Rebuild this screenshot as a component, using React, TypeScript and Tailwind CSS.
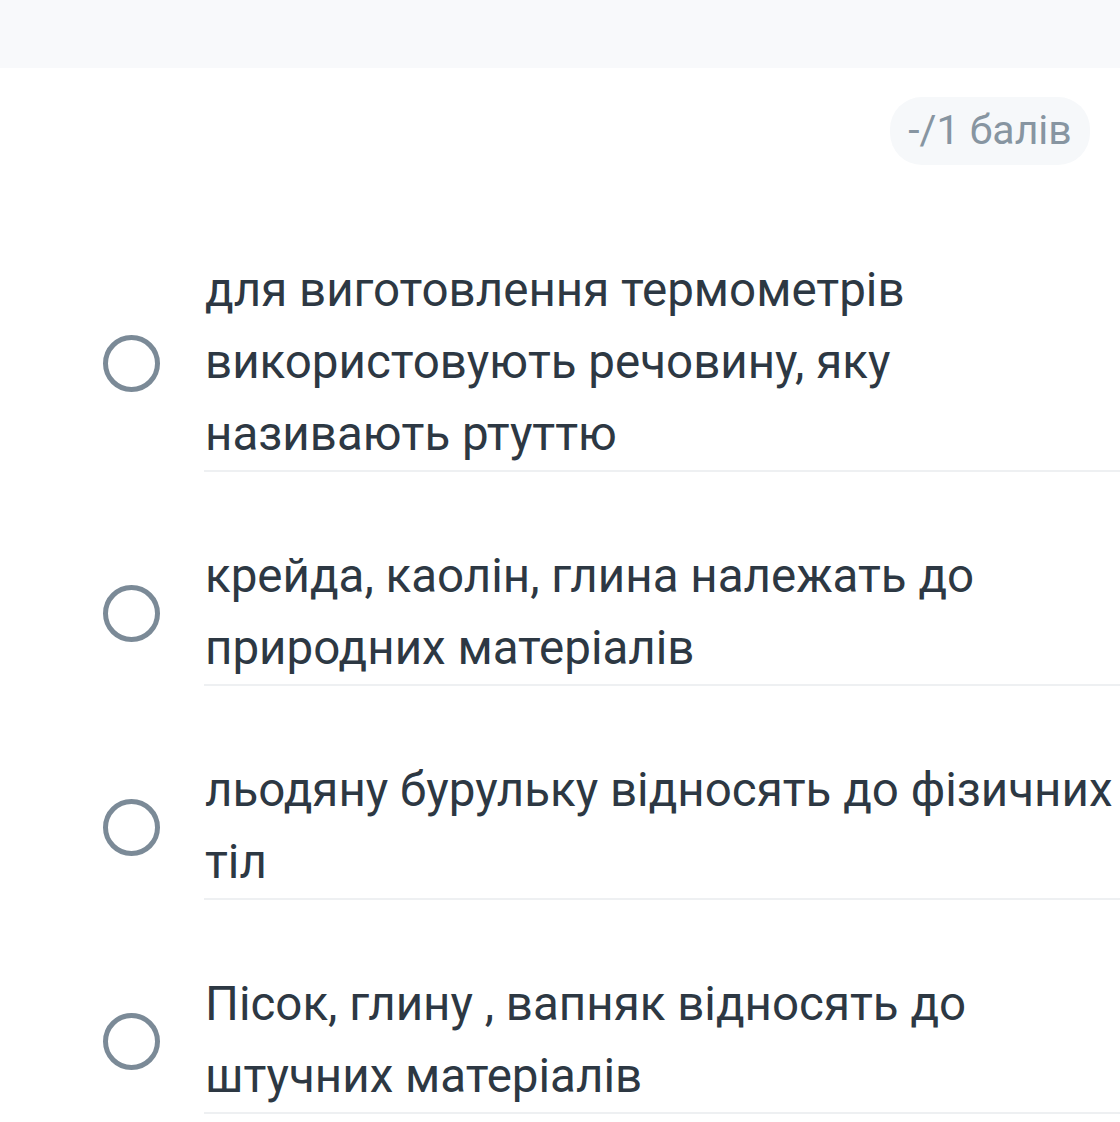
import React from 'react';

const options: string[][] = [
  ['для виготовлення термометрів', 'використовують речовину, яку', 'називають ртуттю'],
  ['крейда, каолін, глина належать до', 'природних матеріалів'],
  ['льодяну бурульку відносять до фізичних', 'тіл'],
  ['Пісок, глину , вапняк відносять до', 'штучних матеріалів'],
];

const Radio: React.FC = () => (
  <div className="w-[57px] h-[57px] shrink-0 rounded-full border-[5px] border-[#7b8a97]" />
);

export default function App() {
  return (
    <div className="w-[1120px] h-[1122px] bg-white overflow-hidden" style={{ fontFamily: 'Roboto, "Noto Sans", sans-serif' }}>
      <div className="h-[68px] bg-[#f8f9fb]" />
      <div className="flex justify-end pt-[29px] pr-[30px]">
        <div className="h-[68px] w-[200px] rounded-[32px] bg-[#f6f8fa] flex items-center justify-center text-[41px] text-[#8795a1]">
          -/1 балів
        </div>
      </div>
      <div className="pt-[21px]">
        {options.map((lines, i) => (
          <div key={i} className="flex items-center pt-[68px] pl-[103px]">
            <Radio />
            <div className="ml-[44px] flex-1 border-b-2 border-[#eef0f2] text-[47.5px] leading-[72px] text-[#2d3843]">
              {lines.map((l, j) => (
                <div key={j} className="whitespace-nowrap pl-[1px]">{l}</div>
              ))}
            </div>
          </div>
        ))}
      </div>
    </div>
  );
}
